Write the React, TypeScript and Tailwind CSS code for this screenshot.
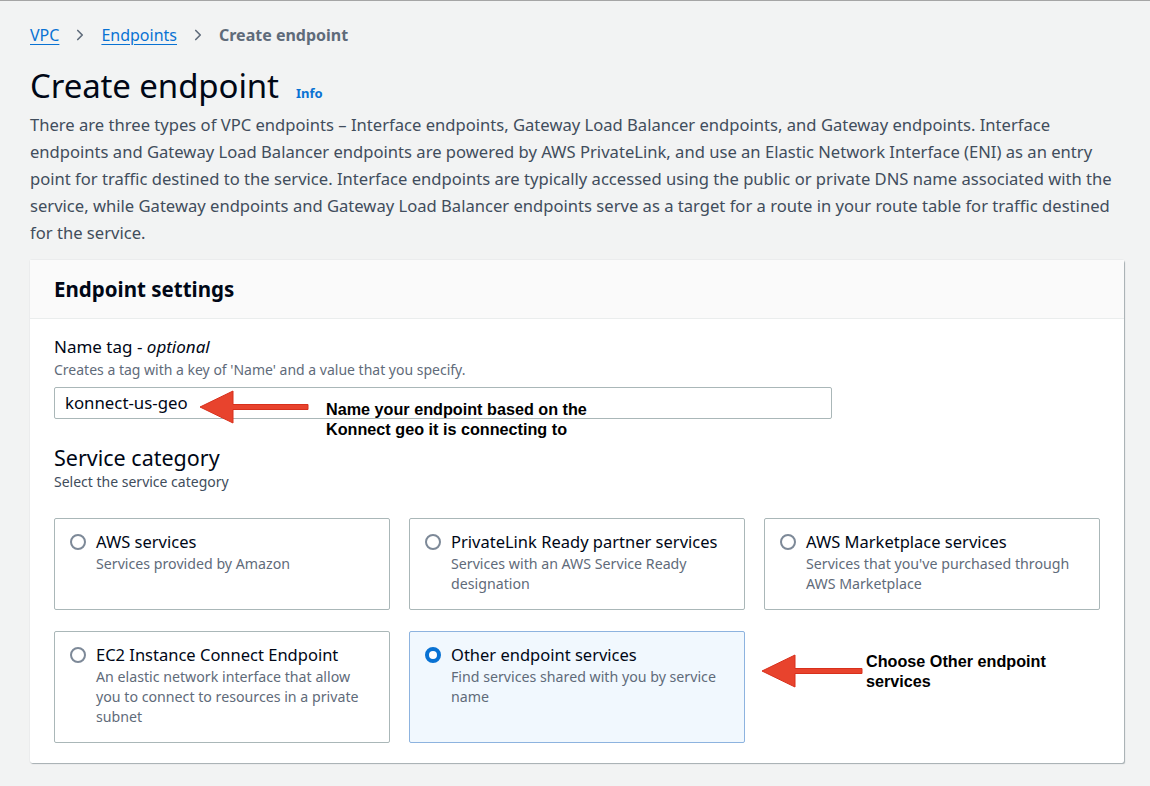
import { ChevronRight } from 'lucide-react';

const cards = [
  { title: 'AWS services', desc: 'Services provided by Amazon' },
  { title: 'PrivateLink Ready partner services', desc: 'Services with an AWS Service Ready designation' },
  { title: 'AWS Marketplace services', desc: "Services that you've purchased through AWS Marketplace" },
  { title: 'EC2 Instance Connect Endpoint', desc: 'An elastic network interface that allow you to connect to resources in a private subnet' },
  { title: 'Other endpoint services', desc: 'Find services shared with you by service name', selected: true },
];

function RedArrow({ width }: { width: number }) {
  return (
    <svg width={width} height="36" viewBox={`0 0 ${width} 36`}>
      <path
        d={`M1 18 L34 2 L34 15.5 L${width - 1} 15.5 L${width - 1} 20.5 L34 20.5 L34 34 Z`}
        fill="#e8432d"
        stroke="#d8301c"
        strokeWidth="1"
        strokeLinejoin="round"
      />
    </svg>
  );
}

function Radio({ checked }: { checked?: boolean }) {
  if (checked) {
    return <span className="mt-[3px] h-4 w-4 shrink-0 rounded-full border-[4px] border-[#0972d3] bg-white" />;
  }
  return <span className="mt-[3px] h-4 w-4 shrink-0 rounded-full border-2 border-[#7d8998] bg-white" />;
}

export default function App() {
  return (
    <div
      className="relative h-[786px] w-[1150px] overflow-hidden border-t border-[#a5a5a5] bg-[#f2f3f3] pl-[30px] pr-[26px] text-[#000716]"
      style={{ fontFamily: '"Noto Sans", "Open Sans", sans-serif' }}
    >
      <nav className="flex items-center gap-[12px] pt-[23px] text-[16px] leading-[22px]">
        <a className="text-[#0972d3] underline underline-offset-[3px]">VPC</a>
        <ChevronRight size={18} strokeWidth={2.2} className="text-[#5f6b7a]" />
        <a className="text-[#0972d3] underline underline-offset-[3px]">Endpoints</a>
        <ChevronRight size={18} strokeWidth={2.2} className="text-[#5f6b7a]" />
        <span className="font-bold text-[#5f6b7a]">Create endpoint</span>
      </nav>

      <div className="mt-[20px] flex items-baseline gap-[17px]">
        <h1 className="text-[33px] leading-[40px] tracking-[-0.1px] text-[#000716]">Create endpoint</h1>
        <span className="text-[13px] font-bold text-[#0972d3]">Info</span>
      </div>

      <p className="mt-[5px] text-[16.6px] leading-[27px] text-[#414d5c]">
        There are three types of VPC endpoints – Interface endpoints, Gateway Load Balancer endpoints, and Gateway endpoints. Interface
        <br />
        endpoints and Gateway Load Balancer endpoints are powered by AWS PrivateLink, and use an Elastic Network Interface (ENI) as an entry
        <br />
        point for traffic destined to the service. Interface endpoints are typically accessed using the public or private DNS name associated with the
        <br />
        service, while Gateway endpoints and Gateway Load Balancer endpoints serve as a target for a route in your route table for traffic destined
        <br />
        for the service.
      </p>

      <section className="relative mt-[14px] rounded-[2px] bg-white shadow-[1px_1px_1px_0_rgba(0,28,36,0.3),0_0_1px_0_rgba(0,28,36,0.3)]">
        <header className="border-b border-[#eaeded] bg-[#fafafa] px-6 py-[15px]">
          <h2 className="text-[20.5px] font-bold leading-[28px]">Endpoint settings</h2>
        </header>

        <div className="px-6 pb-[20px] pt-[17px]">
          <label className="block text-[17px] leading-[22px]">
            Name tag - <i>optional</i>
          </label>
          <p className="mt-[2px] text-[14px] leading-[20px] text-[#5f6b7a]">Creates a tag with a key of 'Name' and a value that you specify.</p>
          <div className="mt-[7px] flex h-[32px] w-[778px] items-center rounded-[2px] border border-[#aab7b8] px-[10px] text-[16.8px]">
            konnect-us-geo
          </div>

          <h3 className="mt-[26px] text-[21.5px] leading-[26px]">Service category</h3>
          <p className="mt-[1px] text-[14px] leading-[20px] text-[#414d5c]">Select the service category</p>

          <div className="mt-[26px] grid grid-cols-3 gap-x-[19px] gap-y-[21px]">
            {cards.map((c) => (
              <div
                key={c.title}
                className={
                  c.selected
                    ? 'flex gap-[10px] rounded-[2px] border border-[#8db3df] bg-[#f1f8fe] pb-[15px] pl-[15px] pr-4 pt-[12px]'
                    : 'flex gap-[10px] rounded-[2px] border border-[#aab7b8] bg-white pb-[15px] pl-[15px] pr-4 pt-[12px]'
                }
              >
                <Radio checked={c.selected} />
                <div>
                  <div className="text-[16.5px] leading-[22px]">{c.title}</div>
                  <div className="mt-[1px] text-[14.2px] leading-[20px] text-[#5f6b7a]">{c.desc}</div>
                </div>
              </div>
            ))}
          </div>
        </div>
      </section>

      <div className="absolute left-[199px] top-[388px]">
        <RedArrow width={110} />
      </div>
      <div
        className="absolute left-[326px] top-[398px] text-[16.2px] font-bold leading-[20px] text-black"
        style={{ fontFamily: '"Liberation Sans", Arial, sans-serif' }}
      >
        Name your endpoint based on the
        <br />
        Konnect geo it is connecting to
      </div>

      <div className="absolute left-[761px] top-[652px]">
        <RedArrow width={102} />
      </div>
      <div
        className="absolute left-[866px] top-[650px] text-[16.2px] font-bold leading-[20px] text-black"
        style={{ fontFamily: '"Liberation Sans", Arial, sans-serif' }}
      >
        Choose Other endpoint
        <br />
        services
      </div>
    </div>
  );
}
